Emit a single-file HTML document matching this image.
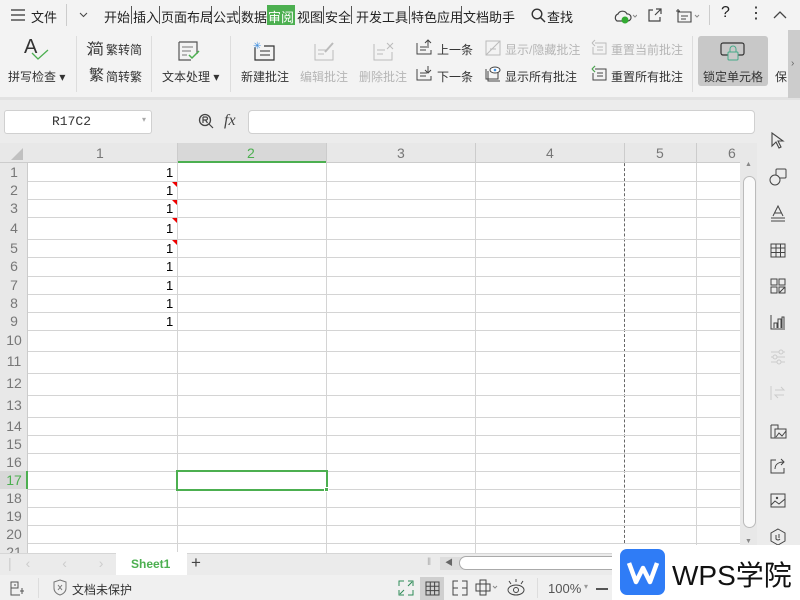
<!DOCTYPE html>
<html><head><meta charset="utf-8"><style>
*{margin:0;padding:0;box-sizing:border-box}
body{width:800px;height:600px;overflow:hidden;background:#f2f2f2;font-family:"Liberation Sans","Noto Sans CJK SC",sans-serif;font-size:12px;color:#333;position:relative}
.a{position:absolute;white-space:nowrap}
.tab{position:absolute;top:7px;font-size:13px;color:#222}
.sep{position:absolute;width:1px;background:#555}
.rl{position:absolute;left:0;width:28px;text-align:center;font-size:14px;color:#777}
.hl{position:absolute;left:28px;width:712px;height:1px;background:#d4d4d4}
.vl{position:absolute;top:163px;width:1px;height:390px;background:#d4d4d4}
.one{position:absolute;left:166px;font-size:13px;color:#000}
.tri{position:absolute;left:172px;width:0;height:0;border-top:5px solid #e00;border-left:5px solid transparent}
.rb{font-size:12px;color:#333}
.dis{color:#b5b5b5}
svg{position:absolute}
</style></head><body>
<!-- title/menu bar -->
<div class="a" style="left:0;top:0;width:800px;height:30px;background:#f3f3f3"></div>
<svg style="left:11px;top:9px" width="14" height="12"><path d="M0 1H14M0 6H14M0 11H14" stroke="#333" stroke-width="1.3"/></svg>
<div class="tab" style="left:31px">文件</div>
<div class="sep" style="left:66px;top:4px;height:22px;background:#ccc"></div>
<svg style="left:79px;top:12px" width="9" height="6"><path d="M1 1L4.5 4.5L8 1" stroke="#444" fill="none"/></svg>
<div class="tab" style="left:104px">开始</div><div class="sep" style="left:131px;top:6px;height:18px"></div>
<div class="tab" style="left:133px">插入</div><div class="sep" style="left:159px;top:6px;height:18px"></div>
<div class="tab" style="left:161px">页面布局</div><div class="sep" style="left:211px;top:6px;height:18px"></div>
<div class="tab" style="left:213px">公式</div><div class="sep" style="left:239px;top:6px;height:18px"></div>
<div class="tab" style="left:241px">数据</div>
<div class="a" style="left:267px;top:5px;width:28px;height:20px;background:#4caf50"></div>
<div class="tab" style="left:268px;color:#fff">审阅</div>
<div class="tab" style="left:297px">视图</div><div class="sep" style="left:323px;top:6px;height:18px"></div>
<div class="tab" style="left:325px">安全</div><div class="sep" style="left:351px;top:6px;height:18px"></div>
<div class="tab" style="left:356px">开发工具</div><div class="sep" style="left:409px;top:6px;height:18px"></div>
<div class="tab" style="left:411px">特色应用</div><div class="sep" style="left:461px;top:6px;height:18px"></div>
<div class="tab" style="left:463px">文档助手</div>
<svg style="left:531px;top:8px" width="15" height="15"><circle cx="6" cy="6" r="4.8" stroke="#333" fill="none" stroke-width="1.4"/><path d="M9.5 9.5L14 14" stroke="#333" stroke-width="1.5"/></svg>
<div class="tab" style="left:547px">查找</div>
<svg style="left:613px;top:8px" width="24" height="16"><path d="M4 13a4 4 0 0 1 1-7a5 5 0 0 1 9 0a3.5 3.5 0 0 1 1 7z" stroke="#444" fill="none" stroke-width="1.2"/><circle cx="12" cy="12" r="3.5" fill="#3a3"/><path d="M20 7l2 2l2-2" stroke="#888" fill="none"/></svg>
<svg style="left:647px;top:7px" width="16" height="16"><path d="M9 2H14V7M14 2L8 8M6 3H2V14H13V10" stroke="#444" fill="none" stroke-width="1.2"/></svg>
<svg style="left:675px;top:8px" width="26" height="16"><path d="M3 4H16V14H3zM6 8H13M6 11H11M3 1V5M1 3H5" stroke="#444" fill="none" stroke-width="1.1"/><path d="M20 7l2 2l2-2" stroke="#888" fill="none"/></svg>
<div class="sep" style="left:709px;top:5px;height:20px;background:#ccc"></div>
<div class="tab" style="left:721px;font-size:16px;top:4px">?</div>
<div class="tab" style="left:748px;font-size:16px;top:3px">⋮</div>
<svg style="left:773px;top:10px" width="14" height="9"><path d="M1 8L7 2L13 8" stroke="#444" fill="none" stroke-width="1.3"/></svg>
<!-- ribbon -->
<div class="a" style="left:0;top:30px;width:800px;height:68px;background:#f3f3f3"></div>
<div class="a" style="left:0;top:97px;width:800px;height:3px;background:#e2e2e2"></div>
<div class="a" style="left:24px;top:36px;font-size:20px;color:#333">A</div>
<svg style="left:30px;top:48px" width="20" height="14"><path d="M2 5L8 11L18 2" stroke="#4caf50" fill="none" stroke-width="1.3"/></svg>
<div class="a rb" style="left:8px;top:68px">拼写检查 ▾</div>
<div class="sep" style="left:76px;top:36px;height:56px;background:#ddd"></div>
<div class="a" style="left:86px;top:38px;font-size:15px;color:#333">氵</div>
<div class="a" style="left:89px;top:38px;font-size:15px">简</div>
<div class="a rb" style="left:106px;top:41px">繁转简</div>
<div class="a" style="left:89px;top:64px;font-size:15px">繁</div>
<div class="a rb" style="left:106px;top:68px">简转繁</div>
<div class="sep" style="left:151px;top:36px;height:56px;background:#ddd"></div>
<svg style="left:177px;top:40px" width="24" height="22"><path d="M2 2H20V14M2 2V20H14" stroke="#555" fill="none" stroke-width="1.2"/><path d="M5 7H16M5 11H14M5 15H10" stroke="#777"/><path d="M12 15L15 18L22 11" stroke="#4caf50" fill="none" stroke-width="1.5"/></svg>
<div class="a rb" style="left:162px;top:68px">文本处理 ▾</div>
<div class="sep" style="left:230px;top:36px;height:56px;background:#ddd"></div>
<svg style="left:252px;top:40px" width="26" height="22"><path d="M3 7V20H22V6H12" stroke="#333" fill="none" stroke-width="1.2"/><path d="M8 11H18M8 15H18" stroke="#333"/><text x="1" y="9" fill="#3b8de0" font-size="10">✳</text></svg>
<div class="a rb" style="left:241px;top:68px">新建批注</div>
<svg style="left:313px;top:40px" width="24" height="22"><path d="M2 4V20H20V10M5 10H13M5 14H11" stroke="#bbb" fill="none"/><path d="M12 12L20 3" stroke="#bbb" stroke-width="2"/></svg>
<div class="a rb dis" style="left:300px;top:68px">编辑批注</div>
<svg style="left:372px;top:40px" width="24" height="22"><path d="M2 4V20H20V12M5 10H13M5 14H11M15 3L21 9M21 3L15 9" stroke="#bbb" fill="none"/></svg>
<div class="a rb dis" style="left:359px;top:68px">删除批注</div>
<svg style="left:416px;top:39px" width="17" height="17"><path d="M1 4V15H15V11M4 8H11M4 11H10M12 9V1M9 4L12 1L15 4" stroke="#444" fill="none"/></svg>
<div class="a rb" style="left:437px;top:41px">上一条</div>
<svg style="left:416px;top:65px" width="17" height="17"><path d="M1 4V15H15V11M4 8H11M4 11H10M12 1V8M9 5L12 8L15 5" stroke="#444" fill="none"/></svg>
<div class="a rb" style="left:437px;top:68px">下一条</div>
<svg style="left:485px;top:40px" width="16" height="16"><path d="M1 1H15V15H1zM1 15L15 1M5 9H11" stroke="#bbb" fill="none"/></svg>
<div class="a rb dis" style="left:505px;top:41px">显示/隐藏批注</div>
<svg style="left:485px;top:65px" width="17" height="17"><path d="M3 6V16H15M1 4V14H13V4" stroke="#444" fill="none"/><ellipse cx="10" cy="5" rx="5" ry="3" stroke="#444" fill="#fff"/><circle cx="10" cy="5" r="1.3" fill="#3b8de0"/></svg>
<div class="a rb" style="left:505px;top:68px">显示所有批注</div>
<svg style="left:591px;top:39px" width="17" height="17"><path d="M4 4H15V15H2V8M6 8H12M6 11H12M1 4L4 1M1 4L4 7" stroke="#bbb" fill="none"/></svg>
<div class="a rb dis" style="left:611px;top:41px">重置当前批注</div>
<svg style="left:591px;top:65px" width="17" height="17"><path d="M4 4H15V15H2V8M6 8H12M6 11H12M1 4L4 1M1 4L4 7" stroke="#444" fill="none"/><path d="M1 4L4 1M1 4L4 7" stroke="#4caf50"/></svg>
<div class="a rb" style="left:611px;top:68px">重置所有批注</div>
<div class="sep" style="left:692px;top:36px;height:56px;background:#ddd"></div>
<div class="a" style="left:698px;top:36px;width:70px;height:50px;background:#c8c8c8;border-radius:3px"></div>
<svg style="left:720px;top:42px" width="26" height="20"><rect x="1" y="1" width="23" height="12" rx="2" stroke="#333" fill="none" stroke-width="1.2"/><rect x="8" y="10" width="10" height="8" rx="1" stroke="#4a8" fill="#c8c8c8"/><path d="M10 10V7a3 3 0 0 1 6 0V10" stroke="#4a8" fill="none"/></svg>
<div class="a rb" style="left:703px;top:68px">锁定单元格</div>
<div class="a rb" style="left:775px;top:68px">保</div>
<div class="a" style="left:788px;top:30px;width:12px;height:68px;background:#ccc"></div>
<div class="a" style="left:791px;top:58px;color:#666;font-size:10px">›</div>
<!-- formula bar -->
<div class="a" style="left:0;top:100px;width:757px;height:43px;background:#ececec"></div>
<div class="a" style="left:4px;top:110px;width:148px;height:24px;background:#fff;border:1px solid #d0d0d0;border-radius:3px"></div>
<div class="a" style="left:52px;top:114px;font-family:'Liberation Mono',monospace;font-size:13px;color:#333">R17C2</div>
<div class="a" style="left:142px;top:115px;font-size:8px;color:#aaa">▾</div>
<svg style="left:198px;top:113px" width="18" height="18"><circle cx="7" cy="7" r="5.5" stroke="#444" fill="none" stroke-width="1.3"/><path d="M5 4V10M5 4H8a1.5 1.5 0 0 1 0 3H5M7.5 7L9.5 10M11 11L15 15" stroke="#444" fill="none" stroke-width="1.2"/></svg>
<div class="a" style="left:224px;top:112px;font-family:'Liberation Serif',serif;font-style:italic;font-size:16px;color:#444">fx</div>
<div class="a" style="left:248px;top:110px;width:507px;height:24px;background:#fff;border:1px solid #d0d0d0;border-radius:4px"></div>
<!-- grid -->
<div class="a" style="left:0;top:143px;width:740px;height:410px;background:#fff"></div>
<div class="a" style="left:0;top:143px;width:740px;height:20px;background:#e8e8e8;border-bottom:1px solid #ccc"></div>
<div class="a" style="left:177px;top:143px;width:149px;height:20px;background:#d8d8d8;border-bottom:2px solid #4caf50"></div>
<div class="a" style="left:0;top:163px;width:28px;height:390px;background:#e8e8e8;border-right:1px solid #ccc"></div>
<div class="a" style="left:0;top:471px;width:28px;height:18px;background:#d8d8d8;border-right:2px solid #4caf50"></div>
<div class="a" style="left:11px;top:148px;border-bottom:12px solid #c0c0c0;border-left:12px solid transparent"></div>
<div class="a" style="left:96px;top:145px;font-size:14px;color:#777">1</div>
<div class="a" style="left:247px;top:145px;font-size:14px;color:#4caf50">2</div>
<div class="a" style="left:397px;top:145px;font-size:14px;color:#777">3</div>
<div class="a" style="left:546px;top:145px;font-size:14px;color:#777">4</div>
<div class="a" style="left:656px;top:145px;font-size:14px;color:#777">5</div>
<div class="a" style="left:728px;top:145px;font-size:14px;color:#777">6</div>
<div class="vl" style="left:177px"></div><div class="vl" style="left:326px"></div><div class="vl" style="left:475px"></div><div class="vl" style="left:696px"></div>
<div class="a" style="left:624px;top:143px;width:0;height:410px;border-left:1px dashed #666"></div>
<div class="sep" style="left:177px;top:143px;height:20px;background:#ccc"></div><div class="sep" style="left:326px;top:143px;height:20px;background:#ccc"></div><div class="sep" style="left:475px;top:143px;height:20px;background:#ccc"></div><div class="sep" style="left:624px;top:143px;height:20px;background:#ccc"></div><div class="sep" style="left:696px;top:143px;height:20px;background:#ccc"></div>
<div class="hl" style="top:181px"></div><div class="hl" style="top:199px"></div><div class="hl" style="top:217px"></div><div class="hl" style="top:239px"></div><div class="hl" style="top:257px"></div><div class="hl" style="top:276px"></div><div class="hl" style="top:294px"></div><div class="hl" style="top:312px"></div><div class="hl" style="top:330px"></div><div class="hl" style="top:351px"></div><div class="hl" style="top:373px"></div><div class="hl" style="top:395px"></div><div class="hl" style="top:417px"></div><div class="hl" style="top:435px"></div><div class="hl" style="top:453px"></div><div class="hl" style="top:471px"></div><div class="hl" style="top:489px"></div><div class="hl" style="top:507px"></div><div class="hl" style="top:525px"></div><div class="hl" style="top:543px"></div>
<div class="rl" style="top:164px">1</div><div class="rl" style="top:182px">2</div><div class="rl" style="top:200px">3</div><div class="rl" style="top:220px">4</div><div class="rl" style="top:240px">5</div><div class="rl" style="top:258px">6</div><div class="rl" style="top:277px">7</div><div class="rl" style="top:295px">8</div><div class="rl" style="top:313px">9</div><div class="rl" style="top:332px">10</div><div class="rl" style="top:353px">11</div><div class="rl" style="top:375px">12</div><div class="rl" style="top:397px">13</div><div class="rl" style="top:418px">14</div><div class="rl" style="top:436px">15</div><div class="rl" style="top:454px">16</div><div class="rl" style="top:472px;color:#4caf50">17</div><div class="rl" style="top:490px">18</div><div class="rl" style="top:508px">19</div><div class="rl" style="top:526px">20</div><div class="rl" style="top:544px">21</div>
<div class="one" style="top:165px">1</div><div class="one" style="top:183px">1</div><div class="one" style="top:201px">1</div><div class="one" style="top:221px">1</div><div class="one" style="top:241px">1</div><div class="one" style="top:259px">1</div><div class="one" style="top:278px">1</div><div class="one" style="top:296px">1</div><div class="one" style="top:314px">1</div>
<div class="tri" style="top:182px"></div><div class="tri" style="top:200px"></div><div class="tri" style="top:218px"></div><div class="tri" style="top:240px"></div>
<div class="a" style="left:176px;top:470px;width:152px;height:21px;border:2px solid #4caf50"></div>
<div class="a" style="left:324px;top:487px;width:5px;height:5px;background:#4caf50;border:1px solid #fff"></div>
<!-- vertical scrollbar -->
<div class="a" style="left:740px;top:143px;width:17px;height:410px;background:#e8e8e8"></div>
<div class="a" style="left:743px;top:176px;width:13px;height:352px;background:#fafafa;border:1px solid #bbb;border-radius:7px"></div>
<div class="a" style="left:745px;top:161px;font-size:7px;color:#888">▲</div>
<div class="a" style="left:745px;top:538px;font-size:7px;color:#888">▼</div>
<!-- right panel -->
<div class="a" style="left:757px;top:100px;width:43px;height:453px;background:#ececec"></div>
<svg style="left:770px;top:132px" width="16" height="18"><path d="M2 1L2 14L6 10L9 16L11 15L8 9L13 9Z" stroke="#444" fill="none" stroke-width="1.1"/></svg>
<svg style="left:769px;top:168px" width="18" height="18"><rect x="7" y="1" width="10" height="9" rx="1" stroke="#444" fill="none"/><circle cx="6" cy="12" r="5" stroke="#444" fill="#ececec"/></svg>
<svg style="left:770px;top:204px" width="16" height="18"><path d="M3 12L8 2L13 12M5 9H11M1 14H15M1 17H15" stroke="#444" fill="none"/></svg>
<svg style="left:770px;top:243px" width="16" height="15"><path d="M1 1H15V14H1zM1 5H15M1 9.5H15M6 1V14M10.5 1V14" stroke="#444" fill="none"/></svg>
<svg style="left:770px;top:278px" width="16" height="16"><path d="M1 1H7V7H1zM9 1H15V7H9zM1 9H7V15H1zM9 9H15V15H9zM9 15L15 9" stroke="#444" fill="none"/></svg>
<svg style="left:770px;top:314px" width="16" height="16"><path d="M1 1V15H15M4 14V9H7V14M8 14V5H11V14M12 14V3H14V14" stroke="#444" fill="none"/></svg>
<svg style="left:770px;top:349px" width="16" height="16"><path d="M1 3H15M1 8H15M1 13H15" stroke="#ccc"/><circle cx="11" cy="3" r="2" fill="#ececec" stroke="#ccc"/><circle cx="5" cy="8" r="2" fill="#ececec" stroke="#ccc"/><circle cx="9" cy="13" r="2" fill="#ececec" stroke="#ccc"/></svg>
<svg style="left:770px;top:385px" width="16" height="16"><path d="M1 1V15M5 5H14L11 2M14 10H5L8 13" stroke="#ccc" fill="none"/></svg>
<svg style="left:770px;top:422px" width="17" height="17"><path d="M1 3V16H16V7H5V16M1 3H8V7" stroke="#444" fill="none"/><path d="M6 15L9 11L12 14L16 9" stroke="#444" fill="none"/></svg>
<svg style="left:770px;top:458px" width="16" height="16"><path d="M6 2H1V15H14V10M5 11C5 6 9 4 14 4M11 1L14 4L11 7" stroke="#444" fill="none"/></svg>
<svg style="left:770px;top:493px" width="16" height="15"><rect x="1" y="1" width="14" height="13" stroke="#444" fill="none"/><path d="M1 12L5 8L9 11L15 6" stroke="#444" fill="none"/><circle cx="7" cy="5" r="1.2" fill="#444"/></svg>
<svg style="left:770px;top:528px" width="16" height="18"><path d="M8 1L15 5V13L8 17L1 13V5Z" stroke="#444" fill="none"/><path d="M6 7V11Q8 13 10 11M9 6V10" stroke="#444" fill="none"/></svg>
<!-- sheet tabs -->
<div class="a" style="left:0;top:553px;width:800px;height:22px;background:#ebebeb;border-top:1px solid #d6d6d6"></div>
<div class="a" style="left:8px;top:555px;font-size:14px;color:#ccc;letter-spacing:14px">|‹ ‹ › ›|</div>
<div class="a" style="left:116px;top:552px;width:71px;height:23px;background:#fff"></div>
<div class="a" style="left:131px;top:557px;font-size:12px;font-weight:bold;color:#4caf50">Sheet1</div>
<div class="a" style="left:191px;top:553px;font-size:17px;color:#444">+</div>
<div class="a" style="left:427px;top:557px;font-size:10px;color:#aaa">‖</div>
<div class="a" style="left:440px;top:557px;width:180px;height:13px;background:#ddd"></div>
<div class="a" style="left:445px;top:557px;font-size:8px;color:#666">◀</div>
<div class="a" style="left:459px;top:556px;width:170px;height:14px;background:#fff;border:1px solid #aaa;border-radius:7px"></div>
<!-- status bar -->
<div class="a" style="left:0;top:575px;width:800px;height:25px;background:#f0f0f0"></div>
<svg style="left:8px;top:580px" width="18" height="17"><path d="M3 2H10V8H3zM3 8V15H12M6 5H8M14 8V14M12 11H16" stroke="#555" fill="none"/></svg>
<div class="sep" style="left:38px;top:578px;height:20px;background:#ddd"></div>
<svg style="left:53px;top:579px" width="14" height="17"><path d="M7 1L13 3V9Q13 14 7 16Q1 14 1 9V3Z" stroke="#777" fill="none"/><path d="M5 6L9 11M9 6L5 11" stroke="#777"/></svg>
<div class="a" style="left:72px;top:581px;font-size:12px;color:#333">文档未保护</div>
<svg style="left:398px;top:580px" width="16" height="16"><path d="M1 6V1H6M10 1H15V6M15 10V15H10M6 15H1V10M2 14L6 10M14 2L10 6" stroke="#2e8b57" fill="none"/></svg>
<div class="a" style="left:420px;top:577px;width:24px;height:23px;background:#cfcfcf"></div>
<svg style="left:425px;top:581px" width="15" height="15"><path d="M1 1H14V14H1zM1 5.3H14M1 9.6H14M5.3 1V14M9.6 1V14" stroke="#444" fill="none"/></svg>
<svg style="left:452px;top:580px" width="16" height="16"><path d="M6 1H1V15H6M10 1H15V15H10M1 8H6M10 8H15" stroke="#444" fill="none"/></svg>
<svg style="left:475px;top:579px" width="24" height="17"><path d="M5 1H11V16H5zM1 5H15V12H1z" stroke="#444" fill="none"/><path d="M18 7L20 9L22 7" stroke="#888" fill="none"/></svg>
<svg style="left:506px;top:578px" width="20" height="18"><ellipse cx="10" cy="12" rx="8" ry="5" stroke="#444" fill="none"/><circle cx="10" cy="12" r="2.5" stroke="#444" fill="none"/><path d="M10 1V4M3 3L5 6M17 3L15 6" stroke="#444"/></svg>
<div class="sep" style="left:537px;top:578px;height:20px;background:#ddd"></div>
<div class="a" style="left:548px;top:581px;font-size:13px;color:#555">100%</div>
<div class="a" style="left:584px;top:582px;font-size:8px;color:#999">▾</div>
<div class="a" style="left:596px;top:588px;width:12px;height:2px;background:#555"></div>
<!-- WPS logo overlay -->
<div class="a" style="left:612px;top:545px;width:188px;height:55px;background:#fff"></div>
<div class="a" style="left:620px;top:549px;width:45px;height:46px;background:#2f7cf6;border-radius:7px"></div>
<svg style="left:626px;top:560px" width="34" height="26"><path d="M3 3L10 22L17 8L24 22L31 3" stroke="#fff" stroke-width="4.5" fill="none" stroke-linejoin="round"/></svg>
<div class="a" style="left:672px;top:554px;font-size:28px;color:#111;font-family:'Liberation Sans','Noto Sans CJK SC',sans-serif">WPS学院</div>
</body></html>
